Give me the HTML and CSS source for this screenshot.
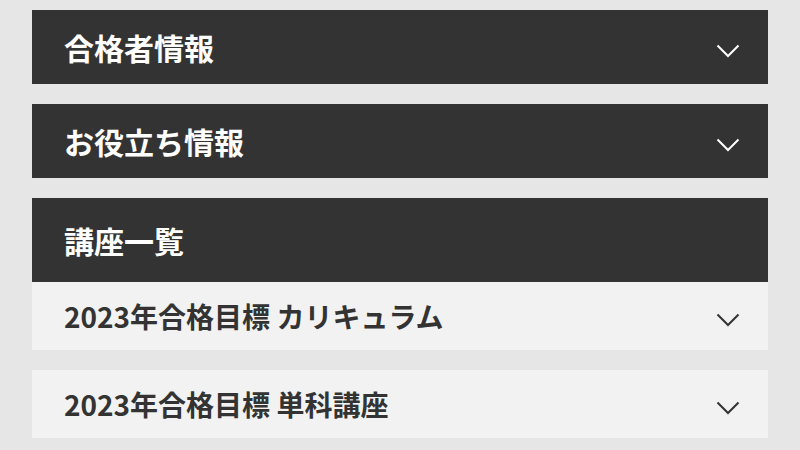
FILE: index.html
```
<!DOCTYPE html>
<html lang="ja">
<head>
<meta charset="utf-8">
<link rel="stylesheet" href="styles.css">
</head>
<body>
<div class="page">
  <section class="panel">
    <div class="head">
      <span class="title">合格者情報</span>
      <svg class="chev" viewBox="0 0 24 14" width="24" height="14"><polyline points="1.5,1.5 12,12 22.5,1.5" fill="none" stroke="#fff" stroke-width="2"/></svg>
    </div>
  </section>
  <section class="panel">
    <div class="head">
      <span class="title">お役立ち情報</span>
      <svg class="chev" viewBox="0 0 24 14" width="24" height="14"><polyline points="1.5,1.5 12,12 22.5,1.5" fill="none" stroke="#fff" stroke-width="2"/></svg>
    </div>
  </section>
  <section class="panel">
    <div class="head head-tall">
      <span class="title">講座一覧</span>
    </div>
    <div class="row">
      <span class="row-title">2023年合格目標 カリキュラム</span>
      <svg class="chev" viewBox="0 0 24 14" width="24" height="14"><polyline points="1.5,1.5 12,12 22.5,1.5" fill="none" stroke="#333" stroke-width="2"/></svg>
    </div>
    <div class="row">
      <span class="row-title">2023年合格目標 単科講座</span>
      <svg class="chev" viewBox="0 0 24 14" width="24" height="14"><polyline points="1.5,1.5 12,12 22.5,1.5" fill="none" stroke="#333" stroke-width="2"/></svg>
    </div>
  </section>
</div>
</body>
</html>
```
FILE: styles.css
```
html, body {
  margin: 0;
  padding: 0;
  background: #e6e6e6;
}
body {
  font-family: "Noto Sans CJK JP", "Noto Sans", sans-serif;
}
.page {
  padding: 10px 32px;
  display: flex;
  flex-direction: column;
  gap: 20px;
}
.panel {
  display: flex;
  flex-direction: column;
  gap: 20px;
}
.panel .head-tall + .row {
  margin-top: -20px;
}
.head {
  height: 74px;
  background: #333333;
  color: #fff;
  display: flex;
  align-items: center;
  justify-content: space-between;
  padding: 0 28px 0 32px;
}
.head-tall {
  height: 84px;
}
.title {
  font-size: 30px;
  font-weight: 700;
  line-height: 1;
}
.row {
  height: 68px;
  background: #f2f2f2;
  color: #333;
  display: flex;
  align-items: center;
  justify-content: space-between;
  padding: 0 28px 0 32px;
}
.row-title {
  font-size: 28px;
  font-weight: 700;
  line-height: 1;
}
.chev {
  display: block;
  margin-top: 8px;
}
```
